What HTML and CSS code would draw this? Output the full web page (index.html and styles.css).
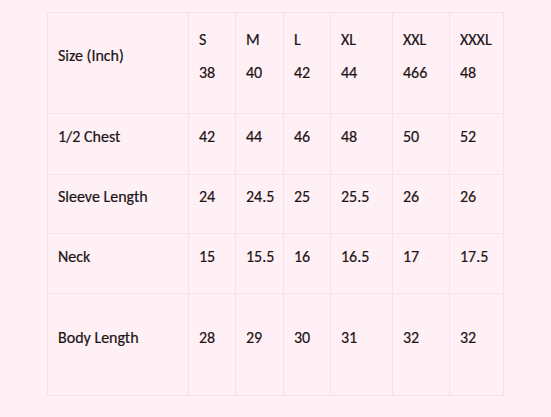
FILE: index.html
```html
<!DOCTYPE html>
<html lang="en">
<head>
<meta charset="utf-8">
<title>Size Chart</title>
<link rel="stylesheet" href="styles.css">
</head>
<body>
<div class="page">
  <table class="size-table">
    <colgroup>
      <col class="c-label">
      <col class="c-s">
      <col class="c-m">
      <col class="c-l">
      <col class="c-xl">
      <col class="c-xxl">
      <col class="c-xxxl">
    </colgroup>
    <tbody>
      <tr class="r-head">
        <td><p>Size (Inch)</p></td>
        <td><p>S</p><p>38</p></td>
        <td><p>M</p><p>40</p></td>
        <td><p>L</p><p>42</p></td>
        <td><p>XL</p><p>44</p></td>
        <td><p>XXL</p><p>466</p></td>
        <td><p>XXXL</p><p>48</p></td>
      </tr>
      <tr class="r-chest">
        <td><p>1/2 Chest</p></td>
        <td><p>42</p></td>
        <td><p>44</p></td>
        <td><p>46</p></td>
        <td><p>48</p></td>
        <td><p>50</p></td>
        <td><p>52</p></td>
      </tr>
      <tr class="r-sleeve">
        <td><p>Sleeve Length</p></td>
        <td><p>24</p></td>
        <td><p>24.5</p></td>
        <td><p>25</p></td>
        <td><p>25.5</p></td>
        <td><p>26</p></td>
        <td><p>26</p></td>
      </tr>
      <tr class="r-neck">
        <td><p>Neck</p></td>
        <td><p>15</p></td>
        <td><p>15.5</p></td>
        <td><p>16</p></td>
        <td><p>16.5</p></td>
        <td><p>17</p></td>
        <td><p>17.5</p></td>
      </tr>
      <tr class="r-body">
        <td><p>Body Length</p></td>
        <td><p>28</p></td>
        <td><p>29</p></td>
        <td><p>30</p></td>
        <td><p>31</p></td>
        <td><p>32</p></td>
        <td><p>32</p></td>
      </tr>
    </tbody>
  </table>
</div>
</body>
</html>
```
FILE: styles.css
```css
html, body {
  margin: 0;
  background: #fff0f5;
}
.page {
  padding-top: 12px;
}
.size-table {
  margin: 0 auto;
  width: 456px;
  table-layout: fixed;
  border-collapse: collapse;
  font-family: Carlito, Calibri, "Liberation Sans", sans-serif;
  font-size: 16px;
  line-height: 20px;
  color: #1c1417;
  -webkit-text-stroke: 0.2px #1c1417;
}
.size-table td {
  border: 1px solid #fbdfe9;
  padding: 0 10px;
  vertical-align: middle;
}
.size-table p {
  margin: 0 0 14px;
}
.size-table p + p {
  margin-top: -1px;
}
.c-label { width: 141px; }
.c-s { width: 47px; }
.c-m { width: 48px; }
.c-l { width: 47px; }
.c-xl { width: 62px; }
.c-xxl { width: 57px; }
.c-xxxl { width: 54px; }
.r-head { height: 101px; }
.r-chest { height: 61px; }
.r-sleeve { height: 59px; }
.r-neck { height: 60px; }
.r-body { height: 102px; }
```
